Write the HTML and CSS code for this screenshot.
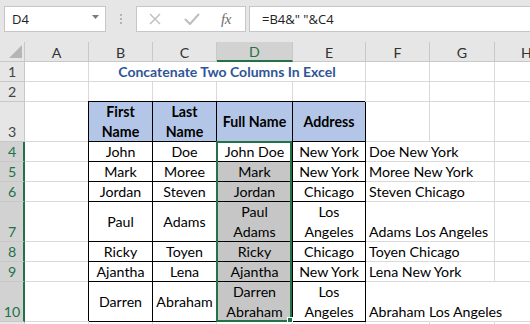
FILE: index.html
```html
<!DOCTYPE html>
<html>
<head>
<meta charset="utf-8">
<link rel="stylesheet" href="styles.css">
</head>
<body>
<div class="toolbar">
  <div class="namebox"><span>D4</span><svg class="caret" width="7" height="4" viewBox="0 0 7 4"><polygon points="0,0 7,0 3.5,4" fill="#7a7a7a"/></svg></div>
  <div class="grip"><svg width="2" height="10" viewBox="0 0 2 10"><rect x="0" y="0" width="2" height="2" fill="#b3b3b3"/><rect x="0" y="4" width="2" height="2" fill="#b3b3b3"/><rect x="0" y="8" width="2" height="2" fill="#b3b3b3"/></svg></div>
  <div class="fxbtns">
    <svg class="ico-x" width="12" height="12" viewBox="0 0 12 12"><path d="M1 1 L11 11 M11 1 L1 11" stroke="#bdbdbd" stroke-width="1.4" fill="none"/></svg>
    <svg class="ico-ok" width="16" height="12" viewBox="0 0 16 12"><path d="M1 6 L6 11 L15 1" stroke="#bdbdbd" stroke-width="2" fill="none"/></svg>
    <span class="fx">fx</span>
  </div>
  <div class="formula">=B4&amp;" "&amp;C4</div>
</div>
<div class="sheet">
  <div class="corner"><svg width="14" height="14" viewBox="0 0 14 14"><polygon points="0,13 13,13 13,0" fill="#b5b5b5"/></svg></div>
  <div class="ch">A</div><div class="ch">B</div><div class="ch">C</div><div class="ch on">D</div><div class="ch">E</div><div class="ch">F</div><div class="ch">G</div><div class="ch">H</div>

  <div class="rh">1</div><div class="c"></div><div class="c title">Concatenate Two Columns In Excel</div><div class="c"></div><div class="c"></div><div class="c"></div>

  <div class="rh">2</div><div class="c"></div><div class="c"></div><div class="c"></div><div class="c"></div><div class="c"></div><div class="c"></div><div class="c"></div><div class="c"></div>

  <div class="rh">3</div><div class="c"></div><div class="c t th">First<br>Name</div><div class="c t th">Last<br>Name</div><div class="c t th">Full Name</div><div class="c t th">Address</div><div class="c"></div><div class="c"></div><div class="c"></div>

  <div class="rh on">4</div><div class="c"></div><div class="c t">John</div><div class="c t">Doe</div><div class="c t active">John Doe<div class="selbox"><div class="handle"></div></div></div><div class="c t">New York</div><div class="c spill">Doe New York</div><div class="c"></div><div class="c"></div>

  <div class="rh on">5</div><div class="c"></div><div class="c t">Mark</div><div class="c t">Moree</div><div class="c t sel">Mark</div><div class="c t">New York</div><div class="c spill">Moree New York</div><div class="c"></div><div class="c"></div>

  <div class="rh on">6</div><div class="c"></div><div class="c t">Jordan</div><div class="c t">Steven</div><div class="c t sel">Jordan</div><div class="c t">Chicago</div><div class="c spill">Steven Chicago</div><div class="c"></div><div class="c"></div>

  <div class="rh on">7</div><div class="c"></div><div class="c t">Paul</div><div class="c t">Adams</div><div class="c t sel">Paul<br>Adams</div><div class="c t">Los<br>Angeles</div><div class="c spill">Adams Los Angeles</div><div class="c"></div><div class="c"></div>

  <div class="rh on">8</div><div class="c"></div><div class="c t">Ricky</div><div class="c t">Toyen</div><div class="c t sel">Ricky</div><div class="c t">Chicago</div><div class="c spill">Toyen Chicago</div><div class="c"></div><div class="c"></div>

  <div class="rh on">9</div><div class="c"></div><div class="c t">Ajantha</div><div class="c t">Lena</div><div class="c t sel">Ajantha</div><div class="c t">New York</div><div class="c spill">Lena New York</div><div class="c"></div><div class="c"></div>

  <div class="rh on">10</div><div class="c"></div><div class="c t">Darren</div><div class="c t">Abraham</div><div class="c t sel">Darren<br>Abraham</div><div class="c t">Los<br>Angeles</div><div class="c spill">Abraham Los Angeles</div><div class="c spill"></div><div class="c"></div>

  <div class="rh"></div><div class="c"></div><div class="c"></div><div class="c"></div><div class="c"></div><div class="c"></div><div class="c"></div><div class="c"></div><div class="c"></div>
</div>
</body>
</html>
```

FILE: styles.css
```css
* { box-sizing: border-box; }
html, body { margin: 0; padding: 0; }
body {
  width: 530px;
  height: 324px;
  overflow: hidden;
  background: #fff;
  font-family: Lato, "Liberation Sans", sans-serif;
}

/* ---------- formula bar ---------- */
.toolbar {
  height: 42px;
  background: #e6e6e6;
  display: flex;
  align-items: flex-start;
  padding-top: 6px;
  white-space: nowrap;
}
.namebox {
  margin-left: 4px;
  width: 102px;
  height: 26px;
  background: #fff;
  border: 1px solid #c6c6c6;
  display: flex;
  align-items: center;
  justify-content: space-between;
  padding: 0 6px 0 7px;
  font-family: "Open Sans", sans-serif;
  font-size: 13px;
  color: #222;
}
.caret { margin-top: -4px; }
.grip {
  width: 30px;
  height: 26px;
  display: flex;
  justify-content: center;
  align-items: center;
  padding-bottom: 1px;
}
.fxbtns {
  width: 110px;
  height: 26px;
  background: #fff;
  border: 1px solid #c6c6c6;
  display: flex;
  align-items: center;
}
.ico-x { margin-left: 12px; }
.ico-ok { margin-left: 23px; }
.fx {
  margin-left: 21px;
  font-family: "Liberation Serif", serif;
  font-style: italic;
  font-size: 15px;
  color: #6e6e6e;
  letter-spacing: -0.5px;
}
.formula {
  margin-left: 3px;
  flex: 1;
  height: 26px;
  background: #fff;
  border: 1px solid #c6c6c6;
  border-right: none;
  display: flex;
  align-items: center;
  padding-left: 12px;
  font-family: "Open Sans", sans-serif;
  font-size: 13px;
  color: #222;
  white-space: pre;
}

/* ---------- sheet ---------- */
.sheet {
  display: grid;
  grid-template-columns: 25px 64px 64px 64px 76px 73px 64px 65px 64px;
  grid-template-rows: 20px 20px 20px 40px 20px 20px 20px 40px 20px 20px 40px 20px;
  font-size: 14.2px;
  color: #000;
  background: #fff;
}
.corner {
  background: #e6e6e6;
  border-right: 1px solid #c8c8c8;
  border-bottom: 1px solid #c8c8c8;
  display: flex;
  align-items: flex-end;
  justify-content: flex-end;
  padding: 0 1px 2px 0;
}
.ch {
  background: #e6e6e6;
  border-right: 1px solid #c8c8c8;
  border-bottom: 1px solid #c8c8c8;
  display: flex;
  align-items: center;
  justify-content: center;
  color: #333;
  padding-top: 1px;
}
.ch.on {
  background: #d2d2d2;
  color: #217346;
  border-bottom: 2px solid #217346;
}
.rh {
  background: #e6e6e6;
  border-right: 1px solid #c8c8c8;
  border-bottom: 1px solid #c8c8c8;
  display: flex;
  align-items: flex-end;
  justify-content: center;
  color: #444;
  line-height: 19px;
}
.rh.on {
  background: #d2d2d2;
  color: #217346;
  border-right: 2px solid #217346;
  padding-left: 1px;
}
.c {
  border-right: 1px solid #d9d9d9;
  border-bottom: 1px solid #d9d9d9;
  display: flex;
  align-items: flex-end;
  padding: 0 3px;
  white-space: nowrap;
  line-height: 19px;
  min-width: 0;
}
.title {
  grid-column: span 4;
  justify-content: center;
  align-items: center;
  font-weight: bold;
  font-size: 14px;
  color: #2f5597;
}
.t {
  border-right-color: #000;
  border-bottom-color: #000;
  box-shadow: -1px -1px 0 #000;
  justify-content: center;
  align-items: center;
  text-align: center;
  line-height: 19.5px;
}
.th {
  background: #b4c6e7;
  font-weight: bold;
  line-height: 20px;
}
.sel { background: #c6c6c6; }
.spill { border-right-color: transparent; overflow: visible; }
.active { position: relative; }
.selbox {
  position: absolute;
  left: -1px;
  top: -1px;
  width: 76px;
  height: 181px;
  border: 2px solid #217346;
  z-index: 5;
}
.handle {
  position: absolute;
  right: -3px;
  bottom: -3px;
  width: 6px;
  height: 6px;
  background: #217346;
  border: 1px solid #fff;
}
```
